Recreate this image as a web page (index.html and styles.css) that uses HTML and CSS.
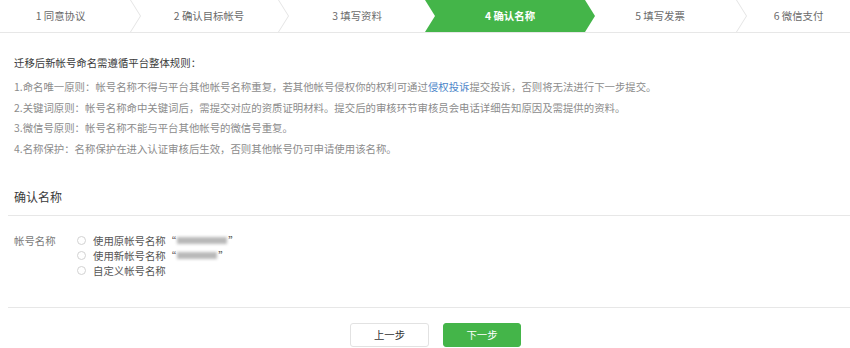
FILE: index.html
```html
<!DOCTYPE html>
<html lang="zh-CN">
<head>
<meta charset="utf-8">
<title>确认名称</title>
<link rel="stylesheet" href="styles.css">
</head>
<body>
<div class="steps">
  <div class="step step-1">1 同意协议</div>
  <div class="step step-2">2 确认目标帐号</div>
  <div class="step step-3">3 填写资料</div>
  <div class="step step-4 current">4 确认名称</div>
  <div class="step step-5">5 填写发票</div>
  <div class="step step-6">6 微信支付</div>
</div>

<div class="rules">
  <p class="rules-title">迁移后新帐号命名需遵循平台整体规则：</p>
  <p class="rule">1.命名唯一原则：帐号名称不得与平台其他帐号名称重复，若其他帐号侵权你的权利可通过<a class="link" href="#">侵权投诉</a>提交投诉，否则将无法进行下一步提交。</p>
  <p class="rule">2.关键词原则：帐号名称命中关键词后，需提交对应的资质证明材料。提交后的审核环节审核员会电话详细告知原因及需提供的资料。</p>
  <p class="rule">3.微信号原则：帐号名称不能与平台其他帐号的微信号重复。</p>
  <p class="rule">4.名称保护：名称保护在进入认证审核后生效，否则其他帐号仍可申请使用该名称。</p>
</div>

<div class="section">
  <h2 class="section-title">确认名称</h2>
  <div class="form-row">
    <div class="form-label">帐号名称</div>
    <div class="options">
      <label class="option"><span class="radio"></span>使用原帐号名称“<span class="masked masked-long"></span>”</label>
      <label class="option"><span class="radio"></span>使用新帐号名称“<span class="masked masked-short"></span>”</label>
      <label class="option"><span class="radio"></span>自定义帐号名称</label>
    </div>
  </div>
</div>

<div class="actions">
  <button class="btn btn-default">上一步</button>
  <button class="btn btn-primary">下一步</button>
</div>
</body>
</html>
```

FILE: styles.css
```css
* { box-sizing: border-box; }

body {
  margin: 0;
  background: #fff;
  font-family: "Noto Sans CJK SC", "Noto Sans", sans-serif;
  font-size: 10.4px;
  color: #666;
  width: 850px;
  overflow: hidden;
}

/* steps */
.steps {
  display: flex;
  height: 33px;
  border-bottom: 1px solid #e7e7e7;
}

.step {
  position: relative;
  height: 32px;
  line-height: 32px;
  text-align: center;
  color: #6a6a6a;
  white-space: nowrap;
}

.step::before,
.step::after {
  content: "";
  position: absolute;
  right: 0;
  width: 1px;
  height: 16px;
  background: #e4e4e4;
}
.step::before {
  top: 0;
  transform-origin: bottom;
  transform: skewX(32deg);
}
.step::after {
  top: 16px;
  transform-origin: top;
  transform: skewX(-32deg);
}

.step-1 { width: 141px; padding-right: 20px; }
.step-2 { width: 148px; padding-right: 12px; }
.step-3 { width: 136px; }
.step-3::before, .step-3::after { display: none; }
.step-4 { width: 170px; }
.step-5 { width: 152px; padding-right: 22px; }
.step-6 { flex: 1; }
.step-6::before, .step-6::after { display: none; }

.step.current {
  background: #44b549;
  color: #fff;
  font-weight: bold;
  clip-path: polygon(0 0, calc(100% - 10px) 0, 100% 50%, calc(100% - 10px) 100%, 0 100%, 10px 50%);
}
.step.current::before, .step.current::after { display: none; }

/* rules */
.rules {
  padding: 20px 0 0 14px;
}
.rules p { margin: 0; white-space: nowrap; }
.rules-title {
  line-height: 20px;
  color: #3a3a3a;
  margin-bottom: 4px !important;
}
.rule {
  line-height: 20.5px;
  color: #8c8c8c;
}
.link {
  color: #4d86c9;
  text-decoration: none;
}

/* section */
.section {
  margin: 28px 0 0 8px;
}
.section-title {
  margin: 0;
  padding: 0 0 8px 6px;
  font-size: 12px;
  font-weight: normal;
  line-height: 20px;
  color: #3a3a3a;
  border-bottom: 1px solid #e7e7e7;
}

.form-row {
  display: flex;
  padding: 17px 0 0 6px;
  line-height: 15px;
}
.form-label {
  width: 63px;
  color: #7a7a7a;
}
.options {
  display: flex;
  flex-direction: column;
}
.option {
  display: flex;
  align-items: center;
  height: 15px;
  color: #555;
}
.radio {
  width: 9px;
  height: 9px;
  border: 1px solid #d2d2d2;
  border-radius: 50%;
  margin-right: 7px;
  flex: none;
}
.masked {
  display: inline-block;
  height: 7px;
  background: #b9b9b9;
  filter: blur(1.5px);
  margin: 0 1px;
}
.masked-long { width: 50px; }
.masked-short { width: 40px; }

/* actions */
.actions {
  margin: 29px 0 0 8px;
  border-top: 1px solid #e7e7e7;
  padding: 15px 0 0 13px;
  display: flex;
  justify-content: center;
  gap: 14px;
}
.btn {
  width: 78px;
  height: 24px;
  border-radius: 3px;
  font-family: inherit;
  font-size: 10.4px;
  line-height: 22px;
  padding: 0;
  cursor: pointer;
}
.btn-default {
  background: #fff;
  border: 1px solid #e2e2e2;
  color: #333;
  width: 79px;
}
.btn-primary {
  background: #44b549;
  border: 1px solid #44b549;
  color: #fff;
}
```
